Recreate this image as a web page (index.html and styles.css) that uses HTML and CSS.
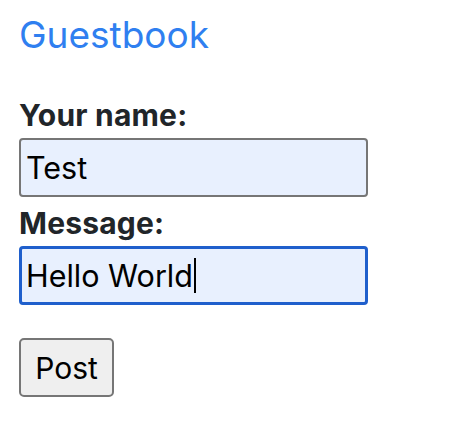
FILE: index.html
```html
<!DOCTYPE html>
<html lang="en">
<head>
<meta charset="utf-8">
<title>Guestbook</title>
<link rel="stylesheet" href="styles.css">
</head>
<body>
<main class="page">
  <h1 class="title">Guestbook</h1>
  <form class="form">
    <label class="label" for="name">Your name:</label>
    <input class="field" id="name" type="text" value="Test">
    <label class="label label-second">Message:</label>
    <div class="field field-focused" role="textbox">Hello World<span class="caret"></span></div>
    <button class="btn" type="button">Post</button>
  </form>
</main>
</body>
</html>
```

FILE: styles.css
```css
* { box-sizing: border-box; }
html, body { margin: 0; background: #ffffff; }
body { font-family: Inter, "Liberation Sans", Arial, sans-serif; color: #212529; }
.page { padding: 13px 19px 0; }
.title {
  margin: 0;
  font-size: 37px;
  line-height: 44px;
  font-weight: 400;
  color: #2f7ff0;
}
.form { display: flex; flex-direction: column; align-items: flex-start; margin-top: 41px; }
.label {
  font-size: 30px;
  line-height: 34px;
  font-weight: 700;
  color: #212529;
  margin-bottom: 6px;
  letter-spacing: 0.2px;
}
.label-second { margin-top: 9px; }
.field {
  width: 349px;
  height: 59px;
  border: 2px solid #767676;
  border-radius: 4px;
  background: #e8f0fe;
  font-family: inherit;
  font-size: 30.5px;
  color: #000;
  padding: 0 5px;
  margin: 0;
  outline: none;
}
.field-focused {
  border: 3px solid #1f5fcc;
  display: flex;
  align-items: center;
  padding: 0 4px;
}
.caret {
  display: inline-block;
  width: 2px;
  height: 35px;
  background: #000;
  margin-left: 1px;
}
.btn {
  margin-top: 33px;
  width: 95px;
  height: 59px;
  border: 2px solid #767676;
  border-radius: 5px;
  background: #efefef;
  font-family: inherit;
  font-size: 30px;
  color: #000;
  padding: 0;
}
```
